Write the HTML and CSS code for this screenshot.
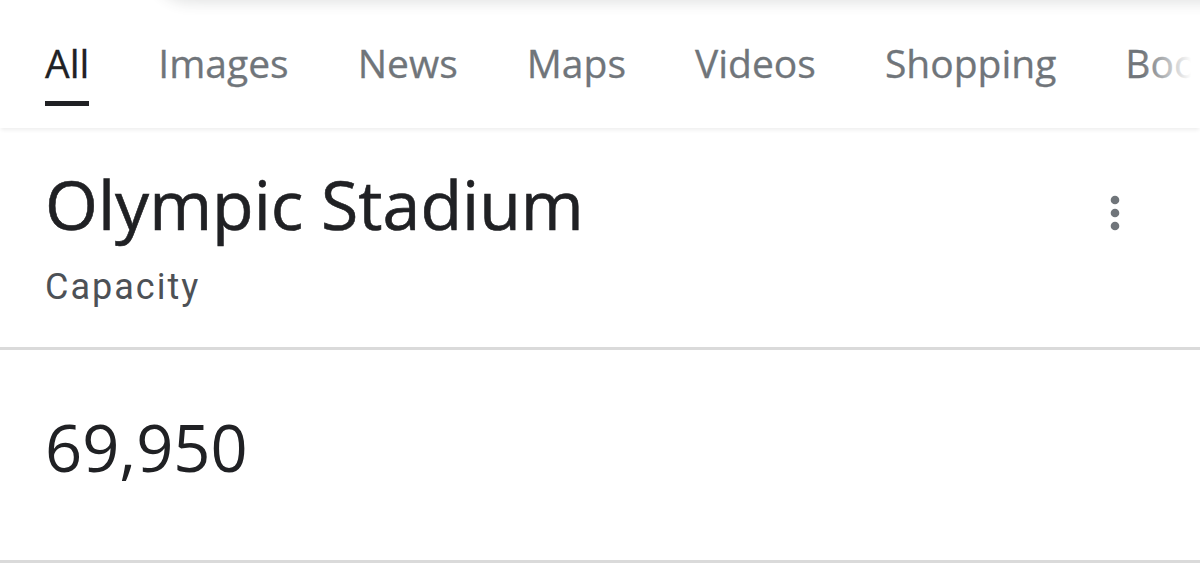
FILE: index.html
```html
<!DOCTYPE html>
<html lang="en">
<head>
<meta charset="utf-8">
<title>Olympic Stadium capacity</title>
<link rel="stylesheet" href="styles.css">
</head>
<body>
<div class="searchbar"></div>
<nav class="tabs">
  <a class="tab active">All</a>
  <a class="tab">Images</a>
  <a class="tab">News</a>
  <a class="tab">Maps</a>
  <a class="tab">Videos</a>
  <a class="tab">Shopping</a>
  <a class="tab">Books</a>
</nav>
<section class="card">
  <header class="card-head">
    <div class="titles">
      <h1 class="title">Olympic Stadium</h1>
      <div class="subtitle">Capacity</div>
    </div>
    <button class="more" aria-label="More options">
      <svg width="10" height="40" viewBox="0 0 10 40"><circle cx="5" cy="5" r="4.3" fill="#70757a"/><circle cx="5" cy="18" r="4.3" fill="#70757a"/><circle cx="5" cy="31" r="4.3" fill="#70757a"/></svg>
    </button>
  </header>
  <div class="answer">69,950</div>
</section>
</body>
</html>
```
FILE: styles.css
```css
html, body {
  margin: 0;
  padding: 0;
  background: #fff;
  overflow: hidden;
}
body {
  font-family: "Open Sans", Roboto, sans-serif;
  color: #202124;
  width: 1200px;
  height: 566px;
}
.searchbar {
  height: 40px;
  margin: -40px -30px 0 150px;
  border-radius: 0 0 0 60px;
  background: #fff;
  box-shadow: 0 3px 14px rgba(60, 64, 67, 0.14);
  position: relative;
  z-index: 1;
}
.tabs {
  position: relative;
  display: flex;
  gap: 69px;
  padding: 39px 0 22px 45px;
  white-space: nowrap;
  overflow: hidden;
  box-shadow: 0 3px 4px -1px rgba(0, 0, 0, 0.07);
}
.tabs::after {
  content: "";
  position: absolute;
  top: 0;
  right: 0;
  width: 58px;
  height: 100%;
  background: linear-gradient(to right, rgba(255,255,255,0), #fff 85%);
}
.tab {
  display: flex;
  flex-direction: column;
  font-size: 39px;
  line-height: 48px;
  color: #70757a;
  -webkit-text-stroke: 0.3px currentColor;
}
.tab::after {
  content: "";
  height: 5px;
  margin-top: 14px;
}
.tab.active {
  color: #202124;
}
.tab.active::after {
  background: #202124;
}
.card-head {
  display: flex;
  justify-content: space-between;
  padding: 36px 80px 38px 45px;
  border-bottom: 3px solid #dadada;
}
.title {
  margin: 0;
  font-size: 68px;
  font-weight: 400;
  line-height: 80px;
  -webkit-text-stroke: 0.6px currentColor;
}
.subtitle {
  margin-top: 21px;
  font-family: Roboto, "Open Sans", sans-serif;
  font-size: 36px;
  line-height: 44px;
  letter-spacing: 2px;
  color: #4d5156;
}
.more {
  align-self: flex-start;
  margin-top: 31px;
  padding: 0;
  border: 0;
  background: none;
  line-height: 0;
}
.answer {
  padding: 57px 45px 73px;
  font-size: 65px;
  line-height: 80px;
  border-bottom: 3px solid #dadada;
}
```
